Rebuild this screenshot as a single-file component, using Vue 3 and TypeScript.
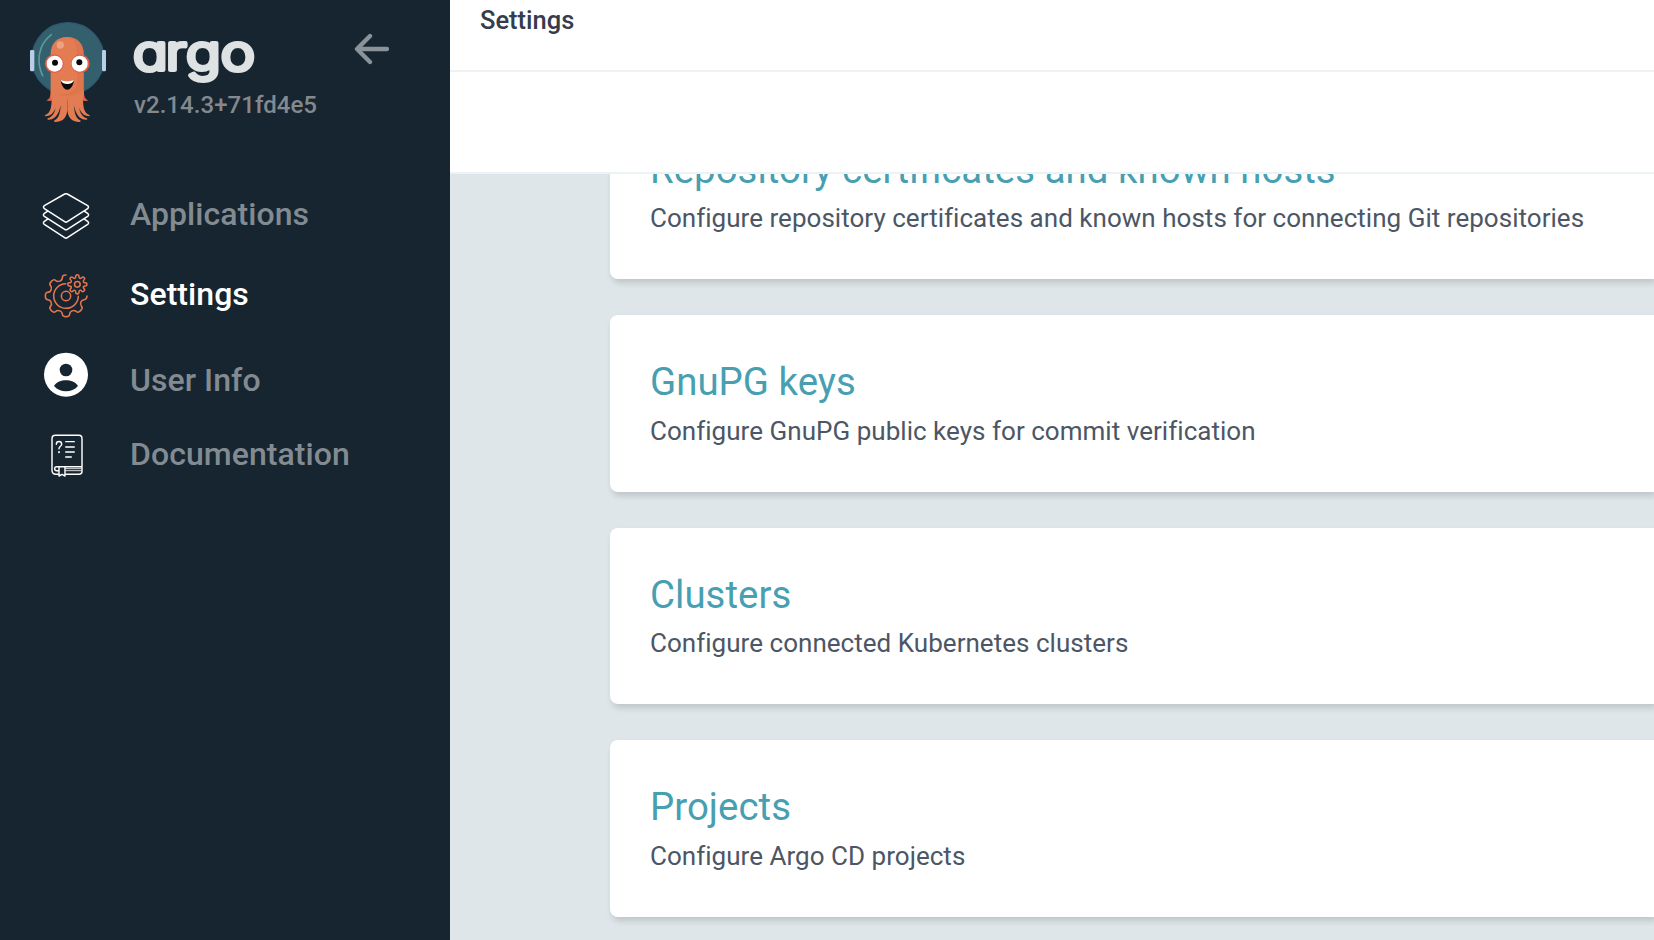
<script setup lang="ts">
interface NavItem {
  id: string
  label: string
}

interface SettingsCard {
  title: string
  description: string
}

const navItems: NavItem[] = [
  { id: 'applications', label: 'Applications' },
  { id: 'settings', label: 'Settings' },
  { id: 'user', label: 'User Info' },
  { id: 'docs', label: 'Documentation' },
]

const activeId = 'settings'

const cards: SettingsCard[] = [
  {
    title: 'Repository certificates and known hosts',
    description: 'Configure repository certificates and known hosts for connecting Git repositories',
  },
  { title: 'GnuPG keys', description: 'Configure GnuPG public keys for commit verification' },
  { title: 'Clusters', description: 'Configure connected Kubernetes clusters' },
  { title: 'Projects', description: 'Configure Argo CD projects' },
]

// Builds a rounded eight-tooth gear outline. An open gear keeps only the part
// running clockwise from the right-hand tooth to the top one.
function gearPath(cx: number, cy: number, outer: number, inner: number, open: boolean): string {
  const points: [number, number][] = []
  const add = (deg: number, r: number) => {
    const a = (deg * Math.PI) / 180
    points.push([cx + r * Math.cos(a), cy + r * Math.sin(a)])
  }
  const last = open ? 6 : 7
  for (let i = 0; i <= last; i++) {
    const a = i * 45
    if (!open || i > 0) {
      add(a - 13, inner)
      add(a - 10, outer)
    }
    if (open && (i === 0 || i === last)) add(a, outer)
    if (!open || i < last) {
      add(a + 10, outer)
      add(a + 13, inner)
    }
  }
  const f = (n: number) => n.toFixed(1)
  const mid = (p: [number, number], q: [number, number]) => `${f((p[0] + q[0]) / 2)} ${f((p[1] + q[1]) / 2)}`
  if (open) {
    let d = `M${f(points[0][0])} ${f(points[0][1])}`
    for (let i = 1; i < points.length - 1; i++) {
      d += `Q${f(points[i][0])} ${f(points[i][1])} ${mid(points[i], points[i + 1])}`
    }
    const end = points[points.length - 1]
    return `${d}L${f(end[0])} ${f(end[1])}`
  }
  const n = points.length
  let d = `M${mid(points[n - 1], points[0])}`
  for (let i = 0; i < n; i++) {
    d += `Q${f(points[i][0])} ${f(points[i][1])} ${mid(points[i], points[(i + 1) % n])}`
  }
  return `${d}Z`
}

const largeGear = gearPath(78, 78, 63, 49, true)
const smallGear = gearPath(112, 43, 29, 20, false)

const tentacles =
  'M94 250H112C112 290 104 318 76 319Q72 317 76 315C92 310 97 290 94 250Z' +
  'M108 250H126C124 300 112 331 84 329Q79 327 84 325C104 319 111 295 108 250Z' +
  'M121 250H142V300C140 320 132 336 104 336Q99 333 104 331C120 324 125 295 121 250Z'
</script>

<template>
  <div class="app">
    <aside class="sidebar">
      <header class="brand">
        <svg class="mascot" viewBox="0 0 300 360" aria-hidden="true">
          <circle cx="144" cy="146" r="108" fill="#34606e" stroke="#2f5a75" stroke-width="4" />
          <path d="M94 74C54 105 48 155 68 197" fill="none" stroke="#5c9b9a" stroke-width="5" stroke-linecap="round" />
          <rect x="30" y="120" width="13" height="64" rx="4" fill="#b9cfe6" />
          <rect x="246" y="120" width="12" height="64" rx="4" fill="#b9cfe6" />
          <path d="M92 240C93 256 90 267 79 271Q87 276 100 270H184Q197 276 205 271C194 267 191 256 192 240Z" fill="#e15f49" />
          <g fill="#e37c53">
            <path d="M92 132C92 100 112 81 141 81S191 100 191 132V262H92Z" />
            <path :d="tentacles" />
            <path :d="tentacles" transform="translate(284 0) scale(-1 1)" />
          </g>
          <path d="M143 81C165 87 171 104 171 132V220C171 242 151 251 113 255Q170 265 191 238V132C191 100 172 82 143 81Z" fill="#db7249" opacity=".65" />
          <circle cx="121" cy="105" r="11" fill="#eda17f" />
          <circle cx="103" cy="161" r="28" fill="#e15f49" />
          <circle cx="181" cy="161" r="28" fill="#e15f49" />
          <circle cx="104" cy="161" r="24" fill="#fff" />
          <circle cx="179" cy="161" r="24" fill="#fff" />
          <circle cx="105" cy="158" r="9" fill="#080808" />
          <circle cx="178" cy="157" r="9" fill="#080808" />
          <path d="M122 209Q142 221 162 209C160 229 150 239 142 239S124 229 122 209Z" fill="#0b0b0b" />
          <path d="M122 209Q142 219 162 209Q158 222 142 222T122 209Z" fill="#fff" />
        </svg>
        <div class="brand-text">
          <svg class="wordmark" viewBox="0 0 130 60" role="img" aria-label="argo">
            <text x="-0.8 26.7 43.7 73" y="39.6" transform="scale(1.19 1)">argo</text>
          </svg>
          <span class="version">v2.14.3+71fd4e5</span>
        </div>
        <svg class="collapse" viewBox="0 0 108 96" aria-hidden="true">
          <path d="M48 9L9 48L48 87M10 48H99" />
        </svg>
      </header>

      <nav class="nav">
        <a v-for="item in navItems" :key="item.id" class="nav-item" :class="[item.id, { active: item.id === activeId }]">
          <svg v-if="item.id === 'applications'" class="icon" viewBox="0 0 156 156" aria-hidden="true">
            <g fill="none" stroke="#fff" stroke-width="4.5" stroke-linejoin="round" stroke-linecap="round">
              <path d="M74 12Q78 10 82 12L143 47Q148 51 143 56L82 95Q78 98 74 95L13 56Q8 51 13 47Z" />
              <path d="M22 64L12 71Q8 75 13 79L74 118Q78 121 82 118L143 79Q148 75 144 71L134 64" />
              <path d="M22 88L12 95Q8 99 13 103L74 143Q78 146 82 143L143 103Q148 99 144 95L134 88" />
            </g>
          </svg>
          <svg v-else-if="item.id === 'settings'" class="icon" viewBox="0 0 156 156" aria-hidden="true">
            <g fill="none" stroke="#e8754b" stroke-width="4.6" stroke-linejoin="round" stroke-linecap="round">
              <path :d="largeGear" />
              <path :d="smallGear" />
              <path d="M115 79A37 37 0 1 1 77 41" />
              <circle cx="78" cy="78" r="14" />
              <circle cx="112" cy="43" r="8.5" />
            </g>
          </svg>
          <svg v-else-if="item.id === 'user'" class="icon" viewBox="0 0 156 156" aria-hidden="true">
            <circle cx="78" cy="74" r="66" fill="#fff" />
            <circle cx="78" cy="60" r="19" fill="#162530" />
            <path d="M42 108C50 95 64 91 78 91S106 95 114 108C104 119 92 124 78 124S52 119 42 108Z" fill="#162530" />
          </svg>
          <svg v-else class="icon" viewBox="0 0 156 156" aria-hidden="true">
            <g fill="none" stroke="#fff" stroke-width="4.3" stroke-linejoin="round" stroke-linecap="round">
              <path d="M55 133H48Q36 133 36 121V26Q36 16 46 16H117Q126 16 126 26V110H50Q44 110 44 116T50 122H55M126 110V124Q126 133 117 133H77" />
              <path d="M77 122H124M77 116H124" stroke-width="2.5" />
              <path d="M57 112V138L66 133L75 138V112" />
              <path d="M49 43C49 32 65 32 65 43C65 49 57 49 57 56" />
              <path d="M57 66V67" stroke-width="5.5" />
              <path d="M77 35H103M77 51H103M77 66H103M77 81H94" stroke-width="3.8" />
            </g>
          </svg>
          <span class="label">{{ item.label }}</span>
        </a>
      </nav>
    </aside>

    <main class="main">
      <header class="topbar">
        <h1>Settings</h1>
      </header>
      <div class="toolbar"></div>
      <section class="content">
        <article v-for="card in cards" :key="card.title" class="card">
          <h2>{{ card.title }}</h2>
          <p>{{ card.description }}</p>
        </article>
      </section>
    </main>
  </div>
</template>

<style>
body {
  margin: 0;
  overflow: hidden;
}
</style>

<style scoped>
.app {
  display: flex;
  width: 100%;
  height: 940px;
  overflow: hidden;
  font-family: Roboto, "Liberation Sans", sans-serif;
  background: #dee6e9;
}

.sidebar {
  box-sizing: border-box;
  flex: 0 0 450px;
  padding: 10px 0 0 20px;
  background: #162530;
}

.brand {
  display: flex;
  align-items: flex-start;
  height: 166px;
}

.mascot {
  width: 100px;
  height: 120px;
}

.brand-text {
  display: flex;
  flex-direction: column;
  width: 200px;
  margin: 20px 0 0 14px;
}

.wordmark {
  width: 130px;
  height: 60px;
  overflow: visible;
}

.wordmark text {
  font-family: Inter, sans-serif;
  font-size: 48.5px;
  font-weight: 300;
  font-feature-settings: "cv11";
  fill: #dee2e2;
  stroke: #dee2e2;
  stroke-width: 4.2;
  stroke-linejoin: round;
}

.version {
  margin-top: 1px;
  font-size: 24px;
  font-weight: 500;
  line-height: 28px;
  letter-spacing: 0.05px;
  color: #83898f;
}

.collapse {
  width: 36px;
  height: 32px;
  margin: 23px 0 0 20px;
}

.collapse path {
  fill: none;
  stroke: #8a929a;
  stroke-width: 13;
  stroke-linecap: round;
  stroke-linejoin: round;
}

.nav {
  display: flex;
  flex-direction: column;
  padding-left: 20px;
}

.nav-item {
  display: flex;
  align-items: flex-start;
  box-sizing: border-box;
  height: 80px;
  padding-top: 14px;
  color: #838b92;
}

.nav-item.active {
  color: #fff;
}

.icon {
  width: 52px;
  height: 52px;
}

.label {
  margin: 5px 0 0 38px;
  font-size: 32px;
  font-weight: 500;
  line-height: 38px;
  letter-spacing: 0.06px;
  white-space: nowrap;
}

.nav-item.user .label {
  margin-top: 11px;
}

.main {
  display: flex;
  flex: 1;
  flex-direction: column;
  min-width: 0;
}

.topbar {
  box-sizing: border-box;
  flex: 0 0 72px;
  padding: 5px 30px 0;
  border-bottom: 2px solid #edf2f5;
  background: #fff;
}

.topbar h1 {
  margin: 0;
  font-size: 25.5px;
  font-weight: 500;
  line-height: 30px;
  color: #363c4a;
}

.toolbar {
  box-sizing: border-box;
  flex: 0 0 102px;
  border-bottom: 2px solid #edf2f5;
  background: #fff;
}

.content {
  display: flex;
  flex: 1;
  flex-direction: column;
  justify-content: flex-end;
  gap: 36px;
  min-height: 0;
  overflow: hidden;
  padding: 0 0 23.4px 160px;
}

.card {
  box-sizing: border-box;
  flex: 0 0 176.5px;
  padding: 44px 40px 0;
  border-radius: 8px 0 0 8px;
  background: #fff;
  box-shadow: 2px 4px 6px rgba(0, 0, 0, 0.14);
}

.card h2 {
  margin: 0;
  font-size: 38.4px;
  font-weight: 400;
  line-height: 46px;
  letter-spacing: 0.03px;
  color: #489fb1;
  white-space: nowrap;
}

.card p {
  margin: 9.5px 0 0;
  font-size: 26px;
  line-height: 32px;
  letter-spacing: 0.03px;
  color: #4c5664;
  white-space: nowrap;
}
</style>
